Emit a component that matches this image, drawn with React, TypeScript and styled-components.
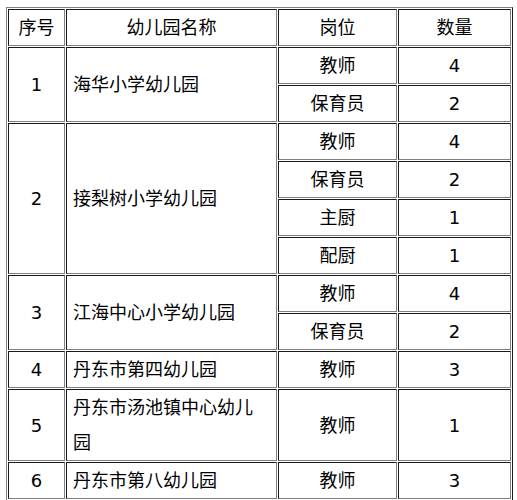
import React from "react";
import styled, { createGlobalStyle } from "styled-components";

const Global = createGlobalStyle`
  html, body { margin: 0; padding: 0; background: #fff; }
  body { font-family: "DejaVu Sans", "Noto Sans CJK SC", sans-serif; }
`;

const Page = styled.div`
  padding: 7px 5px 0 6px;
`;

const Table = styled.table`
  border-collapse: separate;
  border-spacing: 1px;
  border: 1px solid;
  border-color: #808080 #1a1a1a #1a1a1a #808080;
  table-layout: fixed;
  width: 507px;
  color: #000;
  font-size: 18px;
`;

const Cell = styled.td<{ $left?: boolean; $w?: number }>`
  box-sizing: border-box;
  border: 1px solid;
  border-color: #1a1a1a #808080 #808080 #1a1a1a;
  padding: ${(p) => (p.$left ? "0 8px 0 6px" : "0")};
  text-align: ${(p) => (p.$left ? "left" : "center")};
  vertical-align: middle;
  line-height: 35px;
  font-weight: normal;
  ${(p) => (p.$w ? `width: ${p.$w}px;` : "")}
`;

const Head = styled(Cell).attrs({ as: "th" })``;

type Group = { no: string; name: string; jobs: [string, string][] };

const data: Group[] = [
  { no: "1", name: "海华小学幼儿园", jobs: [["教师", "4"], ["保育员", "2"]] },
  {
    no: "2",
    name: "接梨树小学幼儿园",
    jobs: [["教师", "4"], ["保育员", "2"], ["主厨", "1"], ["配厨", "1"]],
  },
  { no: "3", name: "江海中心小学幼儿园", jobs: [["教师", "4"], ["保育员", "2"]] },
  { no: "4", name: "丹东市第四幼儿园", jobs: [["教师", "3"]] },
  { no: "5", name: "丹东市汤池镇中心幼儿园", jobs: [["教师", "1"]] },
  { no: "6", name: "丹东市第八幼儿园", jobs: [["教师", "3"]] },
];

export default function App() {
  return (
    <>
      <Global />
      <Page>
        <Table>
          <thead>
            <tr>
              <Head $w={57}>序号</Head>
              <Head $w={211}>幼儿园名称</Head>
              <Head $w={119}>岗位</Head>
              <Head $w={113}>数量</Head>
            </tr>
          </thead>
          <tbody>
            {data.map((g) =>
              g.jobs.map((j, i) => (
                <tr key={g.no + "-" + i}>
                  {i === 0 && <Cell rowSpan={g.jobs.length}>{g.no}</Cell>}
                  {i === 0 && (
                    <Cell rowSpan={g.jobs.length} $left>
                      {g.name}
                    </Cell>
                  )}
                  <Cell>{j[0]}</Cell>
                  <Cell>{j[1]}</Cell>
                </tr>
              ))
            )}
          </tbody>
        </Table>
      </Page>
    </>
  );
}
